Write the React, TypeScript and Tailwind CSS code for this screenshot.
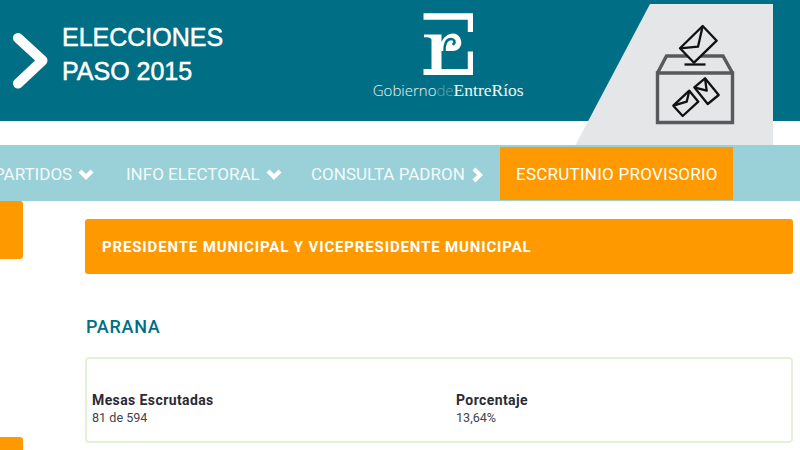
// Elecciones PASO 2015 - escrutinio provisorio

const NAV_ITEMS = [
  { label: 'PARTIDOS', icon: 'down', width: 'w-[132px]' },
  { label: 'INFO ELECTORAL', icon: 'down', width: 'w-[185px]' },
  { label: 'CONSULTA PADRON', icon: 'right', width: 'w-[205px]' },
];

function LogoMark() {
  return (
    <svg width="52" height="64" viewBox="422 12 52 64" fill="#ffffff">
      <path d="M423.5 13.3H473V32H467.8V19.8H423.5Z" />
      <path d="M467.8 51.5H473V75H423.5V69H467.8Z" />
      {/* the r with its curled arm */}
      <path d="M424 34.5H441.5V42C444 37 448 33.5 453 33.5C458 33.5 461.3 38 461.3 42.5C461.3 47 458 51 453 51H441.5V69H431.5V40C431.5 38 429 37.3 424 37.3Z" />
      <path d="M444.5 52C444 44 446.5 39 451 39C454.5 39 455.5 42 453.5 44" fill="none" stroke="#006f85" strokeWidth="2.6" strokeLinecap="round" />
    </svg>
  );
}

function BallotBox() {
  return (
    <svg
      className="absolute left-[575px] top-[4px]"
      width="198"
      height="141"
      viewBox="575 4 198 141"
    >
      <path d="M650 4H773V145H575.5Z" fill="#e5e6e8" />
      <g fill="none" stroke="#58595b" strokeWidth="3.4">
        <path d="M657.5 73L666.5 56H723L732.5 73" />
        <path d="M657.5 73H732.5V122.5H657.5Z" />
      </g>
      <g fill="#e5e6e8" stroke="#111111" strokeWidth="2.3" strokeLinejoin="round">
        <path d="M702.7 26L716.7 40.7L694 62.7L680 48.3Z" />
        <path d="M680 48.3L698 46.7L702.7 26" fill="none" />
        <path d="M689.3 90.7L698.3 101.7L682.7 116L673.3 105.7Z" />
        <path d="M673.3 105.7L686.7 101.7L689.3 90.7" fill="none" />
        <path d="M705 78.3L718.7 95L707.7 104L694.3 87.3Z" />
        <path d="M694.3 87.3L706.7 90.7L705 78.3" fill="none" />
        <path d="M684.5 64.5H705.5" />
      </g>
    </svg>
  );
}

function NavChevron({ dir }: { dir: string }) {
  if (dir === 'down') {
    return (
      <svg width="16" height="12" viewBox="0 0 16 12" className="mb-[2px] shrink-0">
        <path d="M2 3L8 9L14 3" fill="none" stroke="#ffffff" strokeWidth="4.2" />
      </svg>
    );
  }
  return (
    <svg width="12" height="16" viewBox="0 0 12 16" className="mb-[1px] shrink-0">
      <path d="M3 2L9 8L3 14" fill="none" stroke="#ffffff" strokeWidth="4.2" />
    </svg>
  );
}

export default function App() {
  return (
    <div className="relative h-[450px] w-[800px] overflow-hidden bg-white font-['Roboto',sans-serif]">
      {/* Header */}
      <header className="flex h-[121px] items-start bg-[#006f85] text-white">
        <svg className="ml-[13px] mt-[33px]" width="36" height="56" viewBox="13 33 36 56">
          <path
            d="M18 38L42.5 60.5L18 83.5"
            fill="none"
            stroke="#ffffff"
            strokeWidth="10"
            strokeLinecap="round"
            strokeLinejoin="round"
          />
        </svg>
        <div className="ml-[13px] mt-[20px] font-['Liberation_Sans',sans-serif] text-[25px] leading-[34px] [-webkit-text-stroke:0.5px_#ffffff]">
          <div>ELECCIONES</div>
          <div>PASO 2015</div>
        </div>
        <div className="ml-[147px] flex w-[156px] flex-col items-center pt-[12px]">
          <LogoMark />
          <div className="mt-[4px] whitespace-nowrap text-[15px] leading-[20px] text-[#f0f7f8]">
            <span className="font-['Open_Sans',sans-serif] font-light">Gobierno</span>
            <span className="font-['Open_Sans',sans-serif] font-light text-[#5fa6b4]">de</span>
            <span className="font-['Liberation_Serif',serif] text-[17.5px]">EntreRíos</span>
          </div>
        </div>
      </header>

      <BallotBox />

      {/* Nav */}
      <nav className="mt-[24px] flex h-[56px] items-stretch bg-[#9ad0d8] pt-[2px] text-[17px] text-[#f3fafb]">
        <div className="ml-[-22px] flex">
          {NAV_ITEMS.map((item) => (
            <div key={item.label} className={`flex items-center gap-[6px] pl-[16px] pt-[2px] ${item.width}`}>
              <span className="whitespace-nowrap">{item.label}</span>
              <NavChevron dir={item.icon} />
            </div>
          ))}
        </div>
        <div className="mb-[1px] flex w-[233px] items-center whitespace-nowrap bg-[#ff9900] pl-[16px] pt-[2px] tracking-[0.25px] text-white">
          ESCRUTINIO PROVISORIO
        </div>
      </nav>

      {/* Body */}
      <div className="flex">
        <aside className="flex w-[23px] flex-col gap-[178px]">
          <div className="h-[58px] rounded-r-[3px] bg-[#ff9900]" />
          <div className="h-[40px] rounded-r-[3px] bg-[#ff9900]" />
        </aside>
        <main className="ml-[62px] w-[708px] pt-[18px]">
          <div className="flex h-[55px] items-center rounded-[3px] bg-[#ff9900] pl-[17px] pt-px text-[15px] font-bold tracking-[0.85px] text-white">
            PRESIDENTE MUNICIPAL Y VICEPRESIDENTE MUNICIPAL
          </div>
          <h2 className="mt-[43px] pl-px text-[18px] font-medium leading-[20px] tracking-[0.7px] text-[#006f85]">
            PARANA
          </h2>
          <div className="mt-[20px] grid h-[86px] grid-cols-[364px_1fr] rounded-[4px] border-2 border-[#e4f0da] px-[5px] pt-[32px]">
            <div>
              <div className="text-[14px] font-bold leading-[18px] tracking-[0.4px] text-[#2b2b33]">Mesas Escrutadas</div>
              <div className="text-[12.6px] leading-[18px] text-[#44444c]">81 de 594</div>
            </div>
            <div>
              <div className="text-[14px] font-bold leading-[18px] tracking-[0.4px] text-[#2b2b33]">Porcentaje</div>
              <div className="text-[12.6px] leading-[18px] text-[#44444c]">13,64%</div>
            </div>
          </div>
        </main>
      </div>
    </div>
  );
}
